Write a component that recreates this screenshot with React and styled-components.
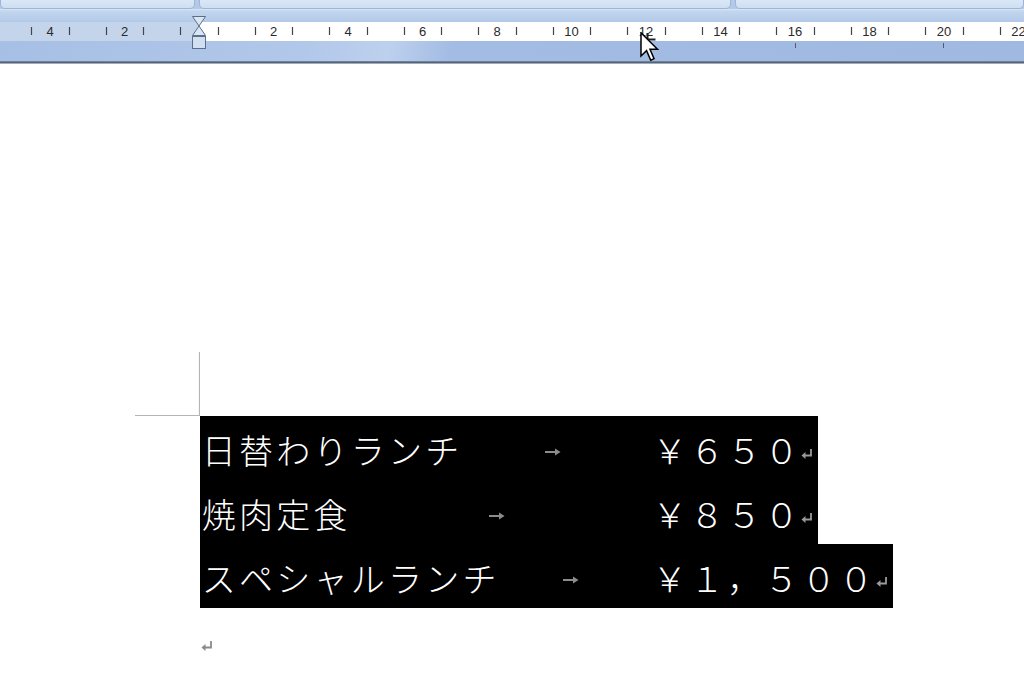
import React from "react"
import styled, { createGlobalStyle } from "styled-components"

const UNIT = 37.25
const ZERO = 199

const GlobalStyle = createGlobalStyle`
  html, body {
    margin: 0;
    padding: 0;
    background: #ffffff;
    overflow: hidden;
  }
  body {
    font-family: "Noto Sans CJK JP", "Noto Sans", sans-serif;
  }
`

const rows = [
    { name: "日替わりランチ", arrowGap: 83, price: "￥６５０" },
    { name: "焼肉定食", arrowGap: 139, price: "￥８５０" },
    { name: "スペシャルランチ", arrowGap: 64, price: "￥１，５００" },
]

const RulerScale = () => {
    const labels = []
    const ticks = []
    for (let n = -4; n <= 22; n += 2) {
        if (n === 0) continue
        labels.push(
            <text key={"l" + n} x={ZERO + n * UNIT} y={14} textAnchor="middle">
                {Math.abs(n)}
            </text>
        )
    }
    for (let k = -6; k <= 22; k++) {
        const x = Math.round(ZERO + (k + 0.5) * UNIT) + 0.5
        ticks.push(<line key={"t" + k} x1={x} x2={x} y1={5} y2={13} />)
    }
    const tabX = Math.round(ZERO + 12 * UNIT) + 1.5
    return (
        <ScaleSvg width="1024" height="19" viewBox="0 0 1024 19">
            <g stroke="#444" strokeWidth="1.2">{ticks}</g>
            <g fill="#2a2a2a" fontSize="13" fontFamily="Liberation Sans, Arial, sans-serif">{labels}</g>
            <path d={`M${tabX} 11 V17.5 H${tabX + 8}`} stroke="#222" strokeWidth="2" fill="none" />
        </ScaleSvg>
    )
}

const IndentMarker = () => (
    <MarkerSvg width="16" height="36" viewBox="0 0 16 36">
        <path d="M1.5 1.5 H14.5 L8 11 Z" fill="#dbe6f3" stroke="#5a6e8c" />
        <path d="M8 11 L14.5 20.5 H1.5 Z" fill="#dbe6f3" stroke="#5a6e8c" />
        <rect x="1.5" y="21.5" width="13" height="12" fill="#d2dff0" stroke="#5a6e8c" />
    </MarkerSvg>
)

const Cursor = () => (
    <CursorSvg width="20" height="30" viewBox="0 0 13 20">
        <path
            d="M0.5 0.5 L0.5 16 L4.2 12.4 L7 18.8 L9.2 17.8 L6.5 11.5 L11.5 11.5 Z"
            fill="#ffffff"
            stroke="#000000"
            strokeWidth="1"
            strokeLinejoin="miter"
        />
    </CursorSvg>
)

const TabArrow = ({ gap }) => (
    <ArrowSvg $gap={gap} width="18" height="10" viewBox="0 0 18 10">
        <path d="M1 5 H13" stroke="#8c8c8c" strokeWidth="2" />
        <path d="M11 1.5 L16.5 5 L11 8.5 Z" fill="#8c8c8c" />
    </ArrowSvg>
)

const ReturnMark = ({ light }) => (
    <ReturnSvg width="14" height="12" viewBox="0 0 14 12">
        <path d="M11 1 V7.5 H4" stroke={light ? "#8a8a8a" : "#9a9a9a"} strokeWidth="1.8" fill="none" />
        <path d="M5.5 4 L1.5 7.5 L5.5 11 Z" fill={light ? "#8a8a8a" : "#9a9a9a"} />
    </ReturnSvg>
)

const CornerMark = () => (
    <CornerSvg width="65" height="65" viewBox="0 0 65 65">
        <path d="M64.5 0 V64 M0 63.5 H64" stroke="#b4b4b4" strokeWidth="1.2" fill="none" />
    </CornerSvg>
)

export default function App() {
    return (
        <Screen>
            <GlobalStyle />
            <Chrome>
                <TabStrip>
                    <Tab $width={193} />
                    <Tab $width={530} />
                    <Tab $grow />
                </TabStrip>
                <UpperBand />
                <Ruler>
                    <RulerMargin />
                    <RulerPaper />
                    <RulerScale />
                </Ruler>
                <LowerBand>
                    <DefaultTab $x={795} />
                    <DefaultTab $x={943} />
                </LowerBand>
                <Edge />
                <IndentMarker />
                <Cursor />
            </Chrome>

            <Page>
                <CornerMark />
                <Lines>
                    {rows.map((row) => (
                        <Line key={row.name}>
                            <NameBlock>
                                {[...row.name].map((ch, i) => (
                                    <Cell key={i}>{ch}</Cell>
                                ))}
                                <TabArrow gap={row.arrowGap} />
                            </NameBlock>
                            {[...row.price].map((ch, i) => (
                                <Cell key={i}>{ch}</Cell>
                            ))}
                            <ReturnMark />
                        </Line>
                    ))}
                    <Line $plain>
                        <ReturnMark light />
                    </Line>
                </Lines>
            </Page>
        </Screen>
    )
}

const Screen = styled.div`
    width: 1024px;
    height: 682px;
    overflow: hidden;
    background: #ffffff;
`

const Chrome = styled.header`
    position: relative;
    display: flex;
    flex-direction: column;
    height: 64px;
`

const TabStrip = styled.div`
    display: flex;
    gap: 4px;
    height: 9px;
    background: #b3c9e6;
`

const Tab = styled.div`
    flex: ${(p) => (p.$grow ? "1" : `0 0 ${p.$width}px`)};
    height: 8px;
    background: linear-gradient(#dbe7f6, #cddff3);
    border: 1px solid #9db6d8;
    border-top: none;
    border-radius: 0 0 5px 5px;
`

const UpperBand = styled.div`
    height: 13px;
    background: linear-gradient(#d9e6f6 0px, #c3d6ee 2px, #b2c9e8 100%);
`

const Ruler = styled.div`
    position: relative;
    display: flex;
    height: 19px;
`

const RulerMargin = styled.div`
    flex: 0 0 ${ZERO}px;
    background: #c4d4eb;
`

const RulerPaper = styled.div`
    flex: 1;
    background: #ffffff;
`

const ScaleSvg = styled.svg`
    position: absolute;
    left: 0;
    top: 0;
`

const LowerBand = styled.div`
    position: relative;
    height: 20px;
    background: linear-gradient(
        100deg,
        #a6bfe4 0%,
        #b2c8ea 30%,
        #bdd1ee 38%,
        #a3bce3 44%,
        #9fb9e1 100%
    );
`

const DefaultTab = styled.span`
    position: absolute;
    left: ${(p) => p.$x}px;
    top: 2px;
    width: 1px;
    height: 5px;
    background: #4d5d78;
`

const Edge = styled.div`
    height: 3px;
    background: linear-gradient(#7f90aa, #55647b 50%, #c9ced6);
`

const MarkerSvg = styled.svg`
    position: absolute;
    left: 191px;
    top: 15px;
`

const CursorSvg = styled.svg`
    position: absolute;
    left: 640px;
    top: 32px;
`

const Page = styled.main`
    padding: 288px 0 0 135px;
`

const CornerSvg = styled.svg`
    display: block;
`

const Lines = styled.div`
    display: flex;
    flex-direction: column;
    align-items: flex-start;
    margin-left: 65px;
    margin-top: -1px;
`

const Line = styled.div`
    display: flex;
    align-items: center;
    height: 64px;
    padding-right: 4px;
    background: ${(p) => (p.$plain ? "transparent" : "#000000")};
    color: #ffffff;
    font-family: "Noto Sans CJK JP", "Noto Sans", sans-serif;
    font-size: 34px;
    line-height: 64px;
`

const NameBlock = styled.div`
    display: flex;
    align-items: center;
    width: 451px;
`

const Cell = styled.span`
    flex: 0 0 ${UNIT}px;
    width: ${UNIT}px;
    text-align: center;
    padding-top: 4px;
    font-weight: 300;
`

const ArrowSvg = styled.svg`
    display: block;
    margin: 8px 0 0 ${(p) => p.$gap}px;
`

const ReturnSvg = styled.svg`
    display: block;
    margin-top: 12px;
`
